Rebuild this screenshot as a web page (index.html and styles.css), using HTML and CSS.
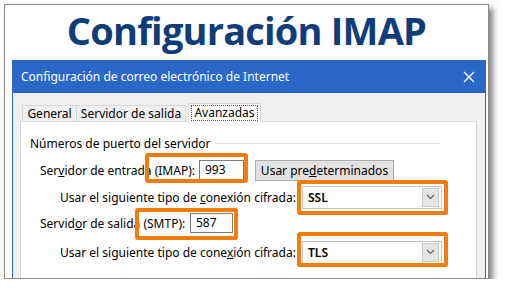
FILE: index.html
```html
<!DOCTYPE html>
<html lang="es">
<head>
  <meta charset="UTF-8" />
  <meta name="viewport" content="width=device-width, initial-scale=1" />
  <title>Configuración IMAP</title>
  <link rel="stylesheet" href="styles.css">
</head>
<body>

  <div class="frame">
    <h1 class="headline">Configuración IMAP</h1>

    <div class="dialog">
      <div class="titlebar">
        <span>Configuración de correo electrónico de Internet</span>
        <svg class="close" width="14" height="14" viewBox="0 0 14 14">
          <path d="M2 2 L12 12 M12 2 L2 12" stroke="#fff" stroke-width="1.3" fill="none" />
        </svg>
      </div>

      <div class="dialog-body">
        <div class="tabs">
          <div class="tab tab-general">General</div>
          <div class="tab tab-out">Servidor de salida</div>
          <div class="tab tab-active"><span class="focus">Avanzadas</span></div>
        </div>

        <div class="panel">
          <div class="group-title">
            <span>Números de puerto del servidor</span>
            <span class="rule"></span>
          </div>

          <div class="row row-in">
            <label class="lbl lbl-in">Ser<u>v</u>idor de entrada (IMAP):</label>
            <div class="field field-in">993</div>
            <button type="button" class="btn">Usar pre<u>d</u>eterminados</button>
          </div>

          <div class="row row-ssl">
            <label class="lbl lbl-enc">Usar el siguiente tipo de <u>c</u>onexión cifrada:</label>
            <div class="combo">
              <span>SSL</span>
              <span class="drop">
                <svg width="9" height="6" viewBox="0 0 9 6"><path d="M1 1 L4.5 4.5 L8 1" stroke="#606060" stroke-width="1.2" fill="none" /></svg>
              </span>
            </div>
          </div>

          <div class="row row-out">
            <label class="lbl lbl-out">Servid<u>o</u>r de salida (SMTP):</label>
            <div class="field field-out">587</div>
          </div>

          <div class="row row-tls">
            <label class="lbl lbl-enc">Usar el siguiente tipo de cone<u>x</u>ión cifrada:</label>
            <div class="combo">
              <span>TLS</span>
              <span class="drop">
                <svg width="9" height="6" viewBox="0 0 9 6"><path d="M1 1 L4.5 4.5 L8 1" stroke="#606060" stroke-width="1.2" fill="none" /></svg>
              </span>
            </div>
          </div>

          <!-- orange highlights drawn over the dialog -->
          <div class="mark mark-imap"></div>
          <div class="mark mark-ssl"></div>
          <div class="mark mark-smtp"></div>
          <div class="mark mark-tls"></div>
        </div>
      </div>
    </div>
  </div>

</body>
</html>
```

FILE: styles.css
```css
body {
  margin: 0;
  background-color: #ffffff;
  font-family: 'Noto Sans', 'Open Sans', sans-serif;
}

.frame {
  margin: 4px 0 0 4px;
  width: 483px;
  height: 273px;
  border: 1px solid #8a8a8a;
  background-color: #ffffff;
  box-shadow: 4px 4px 6px rgba(0, 0, 0, 0.5);
  overflow: hidden;
}

.headline {
  margin: 0;
  height: 55px;
  line-height: 51px;
  text-align: center;
  font-family: 'Open Sans', 'Noto Sans', sans-serif;
  font-size: 38px;
  font-weight: 700;
  font-stretch: 92%;
  letter-spacing: -0.8px;
  color: #0f3d7a;
  white-space: nowrap;
}

.dialog {
  box-sizing: border-box;
  width: 474px;
  height: 260px;
  margin-left: 7px;
  border-left: 1px solid #2b67c8;
  border-right: 1px solid #2b67c8;
  background-color: #f0f0f0;
}

.titlebar {
  display: flex;
  align-items: center;
  justify-content: space-between;
  height: 33px;
  padding: 0 10px 0 9px;
  margin: 0 -1px;
  background-color: #2b67c8;
  color: #ffffff;
  font-size: 12px;
}

.close {
  display: block;
}

.dialog-body {
  padding: 10px 8px 0 7px;
}

.tabs {
  display: flex;
  align-items: flex-end;
  height: 18px;
  padding-left: 2px;
  position: relative;
  z-index: 1;
}

.tab {
  box-sizing: border-box;
  height: 16px;
  border: 1px solid #d9d9d9;
  border-bottom: none;
  background-color: #f0f0f0;
  font-size: 12px;
  line-height: 15px;
  color: #000;
  text-align: center;
}

.tab-general {
  width: 55px;
}

.tab-out {
  width: 109px;
  border-left: none;
}

.tab-active {
  width: 73px;
  height: 19px;
  margin-left: 2px;
  margin-bottom: -1px;
  background-color: #ffffff;
  padding-top: 1px;
}

.focus {
  display: inline-block;
  padding: 0 2px;
  line-height: 14px;
  border: 1px dotted #555;
}

.panel {
  position: relative;
  height: 170px;
  border: 1px solid #d9d9d9;
  background-color: #ffffff;
  padding: 13px 0 0 9px;
  font-size: 12px;
  color: #000;
}

.group-title {
  display: flex;
  align-items: center;
  height: 16px;
  width: 410px;
}

.rule {
  flex: 1;
  height: 1px;
  margin-left: 4px;
  background-color: #dcdcdc;
}

.row {
  display: flex;
  align-items: center;
  height: 26px;
}

.row-in {
  margin-top: 6px;
  padding-left: 10px;
}

.row-ssl {
  margin-top: 1px;
  padding-left: 30px;
}

.row-out {
  padding-left: 10px;
}

.row-tls {
  margin-top: 3px;
  padding-left: 30px;
}

.lbl {
  white-space: nowrap;
}

.lbl-in {
  width: 159px;
}

.lbl-out {
  width: 150px;
}

.lbl-enc {
  width: 242px;
}

.field {
  box-sizing: border-box;
  height: 20px;
  border: 1px solid #7a7a7a;
  padding-left: 5px;
  line-height: 18px;
  background-color: #fff;
}

.field-in {
  width: 45px;
}

.field-out {
  width: 43px;
}

.btn {
  box-sizing: border-box;
  width: 139px;
  height: 21px;
  margin-left: 11px;
  padding: 0;
  border: 1px solid #adadad;
  background-color: #e1e1e1;
  font-family: inherit;
  font-size: 12px;
  color: #000;
}

.combo {
  box-sizing: border-box;
  display: flex;
  align-items: center;
  justify-content: space-between;
  width: 140px;
  height: 23px;
  border: 1px solid #c4c4c4;
  padding: 0 2px 0 5px;
  background-color: #fff;
  font-weight: 600;
}

.drop {
  box-sizing: border-box;
  display: flex;
  align-items: center;
  justify-content: center;
  width: 17px;
  height: 19px;
  border: 1px solid #c8c8c8;
  background-color: #e6e6e6;
}

.mark {
  position: absolute;
  box-sizing: border-box;
  border: 4px solid #f27d0c;
  border-radius: 3px;
}

.mark-imap {
  left: 124px;
  top: 31px;
  width: 103px;
  height: 30px;
}

.mark-ssl {
  left: 276px;
  top: 58px;
  width: 151px;
  height: 35px;
}

.mark-smtp {
  left: 114px;
  top: 86px;
  width: 103px;
  height: 32px;
}

.mark-tls {
  left: 276px;
  top: 110px;
  width: 151px;
  height: 35px;
}
```
